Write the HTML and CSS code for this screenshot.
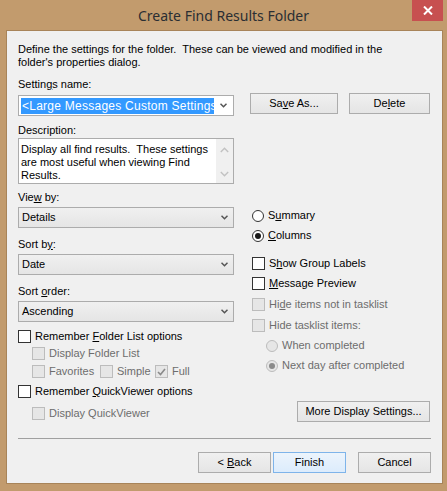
FILE: index.html
```html
<!DOCTYPE html>
<html>
<head>
<meta charset="utf-8">
<link rel="stylesheet" href="styles.css">
</head>
<body>
<div class="window">
  <div class="titlebar">
    <span></span>
    <span class="title">Create Find Results Folder</span>
    <div class="close-wrap">
      <div class="close">
        <svg width="10" height="9" viewBox="0 0 10 9"><path d="M1 0.5 L9 8.5 M9 0.5 L1 8.5" stroke="#fff" stroke-width="2" fill="none"/></svg>
      </div>
    </div>
  </div>
  <div class="panel">
    <p class="intro">Define the settings for the folder.&nbsp; These can be viewed and modified in the<br>folder's properties dialog.</p>

    <div class="settings-row">
      <div class="field">
        <div class="label">Settin<u>g</u>s name:</div>
        <div class="combo-edit">
          <div class="sel">&lt;Large Messages Custom Settings&gt;</div>
          <div class="arrow"><svg width="7" height="5" viewBox="0 0 7 5"><path d="M0.5 0.8 L3.5 3.8 L6.5 0.8" stroke="#555" stroke-width="1.5" fill="none"/></svg></div>
        </div>
      </div>
      <div class="top-buttons">
        <div class="btn btn-save">Sa<u>v</u>e As...</div>
        <div class="btn btn-delete">De<u>l</u>ete</div>
      </div>
    </div>

    <div class="label label-desc">Description:</div>
    <div class="desc">
      <div class="desc-text">Display all find results.&nbsp; These settings<br>are most useful when viewing Find<br>Results.</div>
      <div class="scroll">
        <svg width="9" height="6" viewBox="0 0 9 6"><path d="M0.8 5 L4.5 1.3 L8.2 5" stroke="#c2c2c2" stroke-width="1.4" fill="none"/></svg>
        <svg width="9" height="6" viewBox="0 0 9 6"><path d="M0.8 1 L4.5 4.7 L8.2 1" stroke="#c2c2c2" stroke-width="1.4" fill="none"/></svg>
      </div>
    </div>

    <div class="main">
      <div class="left">
        <div class="label">Vie<u>w</u> by:</div>
        <div class="combo"><span>Details</span><div class="arrow"><svg width="7" height="5" viewBox="0 0 7 5"><path d="M0.5 0.8 L3.5 3.8 L6.5 0.8" stroke="#555" stroke-width="1.5" fill="none"/></svg></div></div>
        <div class="label gap10">Sort b<u>y</u>:</div>
        <div class="combo"><span>Date</span><div class="arrow"><svg width="7" height="5" viewBox="0 0 7 5"><path d="M0.5 0.8 L3.5 3.8 L6.5 0.8" stroke="#555" stroke-width="1.5" fill="none"/></svg></div></div>
        <div class="label gap10">Sort <u>o</u>rder:</div>
        <div class="combo"><span>Ascending</span><div class="arrow"><svg width="7" height="5" viewBox="0 0 7 5"><path d="M0.5 0.8 L3.5 3.8 L6.5 0.8" stroke="#555" stroke-width="1.5" fill="none"/></svg></div></div>

        <div class="opt m8"><span class="cb"></span><span>Remember <u>F</u>older List options</span></div>
        <div class="opt m4 sub disabled"><span class="cb"></span><span>Display Folder List</span></div>
        <div class="opt-row m5 sub disabled">
          <div class="opt w-fav"><span class="cb"></span><span>Favorites</span></div>
          <div class="opt w-simple"><span class="cb"></span><span>Simple</span></div>
          <div class="opt"><span class="cb checked"><svg width="9" height="8" viewBox="0 0 9 8"><path d="M1 4 L3.5 6.5 L8 1" stroke="#8a8a8a" stroke-width="1.6" fill="none"/></svg></span><span>Full</span></div>
        </div>
        <div class="opt m7"><span class="cb"></span><span>Remember <u>Q</u>uickViewer options</span></div>
        <div class="opt m9 sub disabled"><span class="cb"></span><span>Display QuickViewer</span></div>
      </div>

      <div class="right">
        <div class="opt m18"><span class="rb"></span><span>S<u>u</u>mmary</span></div>
        <div class="opt m7"><span class="rb on"></span><span><u>C</u>olumns</span></div>
        <div class="opt m15"><span class="cb"></span><span>S<u>h</u>ow Group Labels</span></div>
        <div class="opt m7"><span class="cb"></span><span><u>M</u>essage Preview</span></div>
        <div class="opt m8 disabled"><span class="cb"></span><span>Hi<u>d</u>e items not in tasklist</span></div>
        <div class="opt m8 disabled"><span class="cb"></span><span>Hide tasklist items:</span></div>
        <div class="opt m7 sub disabled"><span class="rb"></span><span>When completed</span></div>
        <div class="opt m7 sub disabled"><span class="rb on"></span><span>Next day after completed</span></div>
        <div class="btn btn-more">More Display Settings...</div>
      </div>
    </div>

    <div class="separator"></div>

    <div class="bottom-buttons">
      <div class="btn btn-nav">&lt; <u>B</u>ack</div>
      <div class="btn btn-nav btn-default">Finish</div>
      <div class="btn btn-nav btn-cancel">Cancel</div>
    </div>
  </div>
</div>
</body>
</html>
```
FILE: styles.css
```css
html, body {
  margin: 0;
  padding: 0;
}
body {
  background: #c29b6d;
  width: 447px;
  height: 491px;
  overflow: hidden;
}
.window {
  width: 447px;
}
.titlebar {
  height: 30px;
  display: grid;
  grid-template-columns: 1fr auto 1fr;
  align-items: start;
}
.title {
  font-family: "Noto Sans", "Open Sans", sans-serif;
  font-size: 14px;
  color: #2a2e33;
  line-height: 30px;
  margin-top: 1px;
}
.close-wrap {
  display: flex;
  justify-content: flex-end;
  padding-right: 4px;
}
.close {
  width: 31px;
  height: 21px;
  background: #c75050;
  display: flex;
  align-items: center;
  justify-content: center;
}
.panel {
  margin: 0 4px 0 6px;
  border: 1px solid #a88459;
  background: #f0f0f0;
  padding: 12px 11px 10px 11px;
  font-family: "Liberation Sans", Arial, sans-serif;
  font-size: 11px;
  color: #000;
  line-height: 13px;
}
.intro {
  margin: 0;
  line-height: 13px;
}
u {
  text-decoration: underline;
  text-underline-offset: 1px;
}
.label {
  height: 13px;
  line-height: 13px;
  white-space: nowrap;
}
.settings-row {
  display: flex;
  align-items: flex-end;
  margin-top: 9px;
}
.field {
  width: 216px;
}
.combo-edit {
  margin-top: 4px;
  height: 21px;
  box-sizing: border-box;
  border: 1px solid #acacac;
  background: #fff;
  display: flex;
  align-items: center;
}
.sel {
  margin-left: 2px;
  width: 192px;
  padding-left: 1px;
  height: 16px;
  line-height: 16px;
  font-size: 12px;
  letter-spacing: 0.25px;
  background: #3399ff;
  color: #fff;
  white-space: nowrap;
  overflow: hidden;
}
.arrow {
  flex: 1;
  display: flex;
  justify-content: center;
  align-items: center;
}
.top-buttons {
  display: flex;
  margin-left: 16px;
  margin-bottom: 2px;
}
.btn {
  height: 21px;
  box-sizing: border-box;
  border: 1px solid #acacac;
  background: linear-gradient(#f0f0f0, #e5e5e5);
  text-align: center;
  line-height: 19px;
  white-space: nowrap;
}
.btn-save {
  width: 88px;
}
.btn-delete {
  width: 81px;
  margin-left: 11px;
}
.label-desc {
  margin-top: 8px;
}
.desc {
  margin-top: 1px;
  width: 216px;
  height: 46px;
  box-sizing: border-box;
  border: 1px solid #acacac;
  background: #fff;
  display: flex;
}
.desc-text {
  flex: 1;
  padding: 4px 2px;
  line-height: 13px;
}
.scroll {
  width: 17px;
  background: #f0f0f0;
  display: flex;
  flex-direction: column;
  justify-content: space-between;
  align-items: center;
  padding: 8px 0 6px 0;
}
.main {
  display: grid;
  grid-template-columns: 216px 1fr;
  column-gap: 18px;
  margin-top: 7px;
}
.left, .right {
  display: flex;
  flex-direction: column;
}
.combo {
  margin-top: 3px;
  height: 21px;
  box-sizing: border-box;
  border: 1px solid #acacac;
  background: linear-gradient(#f0f0f0, #e5e5e5);
  display: flex;
  align-items: center;
  padding-left: 3px;
}
.combo span {
  flex: 1;
}
.combo .arrow {
  flex: 0 0 17px;
}
.gap10 { margin-top: 10px; }
.m4 { margin-top: 4px; }
.m5 { margin-top: 5px; }
.m7 { margin-top: 7px; }
.m8 { margin-top: 8px; }
.m9 { margin-top: 9px; }
.m15 { margin-top: 15px; }
.m18 { margin-top: 18px; }
.opt {
  display: flex;
  align-items: center;
  height: 13px;
  line-height: 13px;
  white-space: nowrap;
}
.opt-row {
  display: flex;
  height: 13px;
}
.sub {
  padding-left: 14px;
}
.w-fav {
  width: 68px;
}
.w-simple {
  width: 55px;
}
.cb {
  width: 13px;
  height: 13px;
  box-sizing: border-box;
  border: 1px solid #333;
  background: #fff;
  margin-right: 4px;
  flex: 0 0 13px;
  display: flex;
  align-items: center;
  justify-content: center;
}
.rb {
  width: 12px;
  height: 12px;
  box-sizing: border-box;
  border: 1px solid #333;
  border-radius: 50%;
  background: #fff;
  margin-right: 4px;
  flex: 0 0 12px;
  display: flex;
  align-items: center;
  justify-content: center;
}
.rb.on::after {
  content: "";
  width: 6px;
  height: 6px;
  border-radius: 50%;
  background: #1a1a1a;
}
.disabled {
  color: #6d6d6d;
}
.disabled .cb {
  border-color: #bcbcbc;
  background: #e6e6e6;
}
.disabled .rb {
  border-color: #bcbcbc;
  background: #e6e6e6;
}
.disabled .rb.on::after {
  background: #8a8a8a;
}
.btn-more {
  margin-top: 29px;
  width: 133px;
  align-self: flex-end;
  margin-right: 1px;
}
.separator {
  margin-top: 16px;
  border-top: 1px solid #a0a0a0;
}
.bottom-buttons {
  margin-top: 13px;
  display: flex;
  justify-content: flex-end;
}
.btn-nav {
  width: 73px;
}
.btn-default {
  margin-left: 2px;
  border-color: #7eb4ea;
  background: linear-gradient(#ecf4fc, #dcecfc);
}
.btn-cancel {
  margin-left: 12px;
}
```
